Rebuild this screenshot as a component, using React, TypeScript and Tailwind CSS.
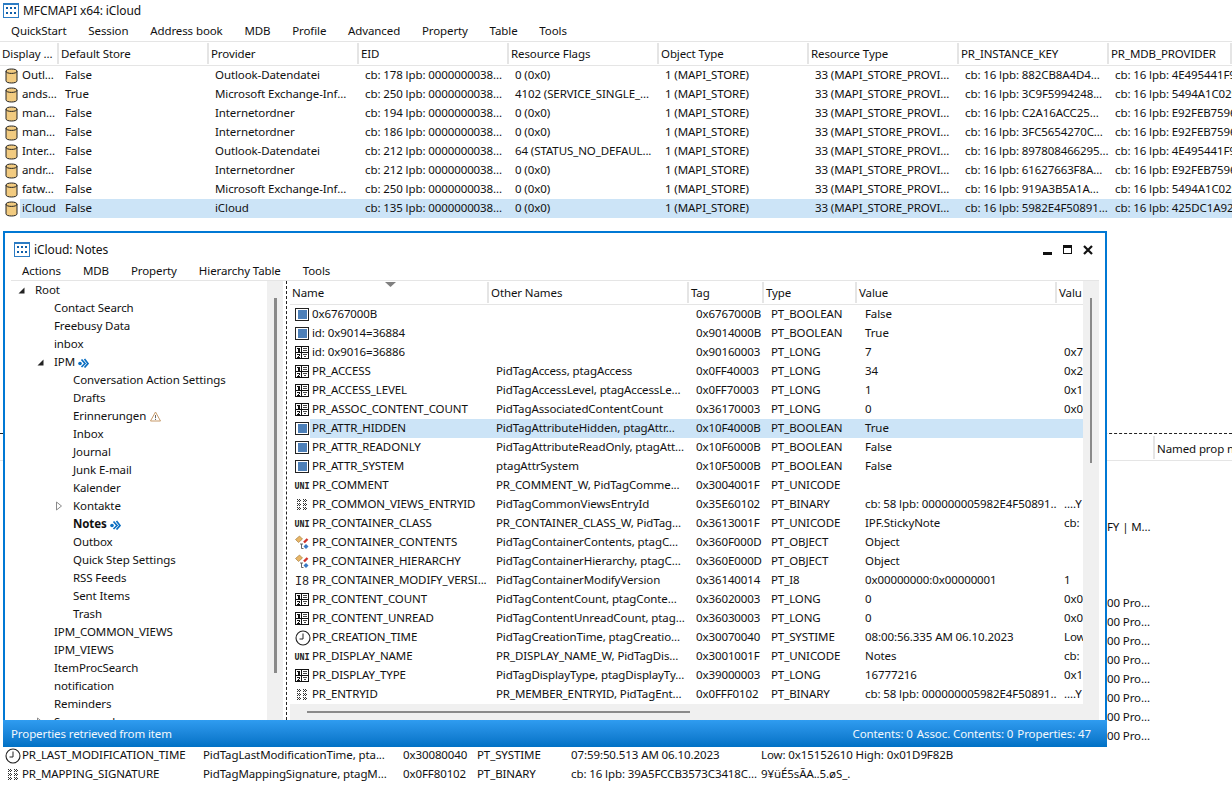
import React from "react";

const Logo = () => (
  <svg width="16" height="16" viewBox="0 0 16 16" shapeRendering="crispEdges" className="shrink-0">
    <rect x="0.5" y="0.5" width="15" height="14" fill="#fff" stroke="#2b7cc4" />
    <rect x="0" y="0" width="16" height="2" fill="#2b7cc4" />
    {[3, 7, 11].map((x) => (
      <React.Fragment key={x}>
        <rect x={x} y="4" width="2" height="2" fill="#0f5ea8" />
        <rect x={x} y="9" width="2" height="2" fill="#0f5ea8" />
      </React.Fragment>
    ))}
  </svg>
);

const Store = () => (
  <svg width="13" height="16" viewBox="0 0 13 16" className="shrink-0">
    <path d="M1 3.2C1 1.8 3.4 1 6.5 1s5.500.8 5.500 2.200v9.600c0 1.400-2.400 2.200-5.500 2.200S1 14.200 1 12.800z" fill="#f2cb80" stroke="#222" strokeWidth="1" />
    <path d="M1 3.200c0 1.400 2.400 2.200 5.500 2.200S12 4.600 12 3.200" fill="none" stroke="#222" strokeWidth="1" />
  </svg>
);

const Bool = () => (
  <svg width="15" height="15" viewBox="0 0 15 15" shapeRendering="crispEdges" className="shrink-0">
    <rect x="0.500" y="1.500" width="13" height="12" fill="#fff" stroke="#222" />
    <rect x="3" y="3" width="9" height="9" fill="#4c7fb8" />
  </svg>
);

const Num = () => (
  <svg width="15" height="15" viewBox="0 0 15 15" shapeRendering="crispEdges" className="shrink-0">
    <rect x="0.500" y="1.500" width="13" height="12" fill="#fff" stroke="#111" />
    <rect x="6" y="1" width="1" height="13" fill="#111" />
    <rect x="1" y="7" width="12" height="1" fill="#111" />
    <rect x="3" y="3" width="2" height="4" fill="#111" />
    <rect x="2" y="3" width="1" height="1" fill="#111" />
    <rect x="2" y="9" width="3" height="1" fill="#111" />
    <rect x="4" y="10" width="1" height="1" fill="#111" />
    <rect x="3" y="11" width="1" height="1" fill="#111" />
    <rect x="2" y="12" width="3" height="1" fill="#111" />
    <rect x="8" y="3" width="4" height="1" fill="#444" />
    <rect x="8" y="5" width="4" height="1" fill="#444" />
    <rect x="8" y="9" width="4" height="1" fill="#444" />
    <rect x="9" y="11" width="2" height="1" fill="#444" />
  </svg>
);

const Uni = () => (
  <svg width="16" height="15" viewBox="0 0 16 15" className="-ml-px shrink-0">
    <text x="0.500" y="11" fontFamily="Liberation Mono, monospace" fontWeight="700" fontSize="10.500" textLength="15" lengthAdjust="spacingAndGlyphs" fill="#222">UNI</text>
  </svg>
);

const I8 = () => (
  <svg width="15" height="15" viewBox="0 0 15 15" className="shrink-0">
    <text x="0" y="11.500" fontFamily="Liberation Mono, monospace" fontSize="12" textLength="14" lengthAdjust="spacingAndGlyphs" fill="#222">I8</text>
  </svg>
);

const binCells: [number, number][] = [];
[2, 3, 4, 6, 7, 8, 10, 11, 12].forEach((y) =>
  [2, 3, 4, 5, 8, 9, 10, 11].forEach((x) => {
    if ((x + y) % 2 === 0) binCells.push([x, y]);
  })
);

const Bin = () => (
  <svg width="15" height="15" viewBox="0 0 15 15" shapeRendering="crispEdges" className="shrink-0">
    {binCells.map(([x, y], i) => (
      <rect key={i} x={x} y={y} width="1" height="1" fill="#333" />
    ))}
  </svg>
);

const Obj = () => (
  <svg width="15" height="15" viewBox="0 0 15 15" className="shrink-0">
    <path d="M0.500 4.500L4.500 1l3 3-4 3.500z" fill="#e8b566" stroke="#9a7434" strokeWidth="0.600" />
    <path d="M9 7.500l3.500-3.500" stroke="#d0342c" strokeWidth="2.400" />
    <path d="M8.500 11.500l2.500-2.500 2.500 2.500-2.500 2.500z" fill="#3a78c2" />
    <path d="M5 9h3M6.500 9v4.500h2" fill="none" stroke="#555" strokeWidth="0.900" />
  </svg>
);

const Clock = () => (
  <svg width="16" height="16" viewBox="0 0 16 16" className="shrink-0">
    <circle cx="8" cy="8" r="7" fill="#fff" stroke="#222" strokeWidth="1.100" />
    <path d="M8 3.500V9H4.500" fill="none" stroke="#222" strokeWidth="1" />
  </svg>
);

const Sync = () => (
  <svg width="11" height="10" viewBox="0 0 11 10" className="shrink-0">
    <circle cx="2" cy="5.500" r="1.800" fill="#0b6fc2" />
    <path d="M3.500 1.500L7 5.500l-3.500 3.500M6.500 1l3.500 4.500L6.500 9.500" fill="none" stroke="#0b6fc2" strokeWidth="1.700" />
  </svg>
);

const Warn = () => (
  <svg width="11" height="11" viewBox="0 0 11 11" className="shrink-0">
    <path d="M5.500 1L10.500 10H0.500z" fill="#fff" stroke="#c79a6a" strokeWidth="1" />
    <path d="M5.500 4v3.200M5.500 8v1" stroke="#666" strokeWidth="1" />
  </svg>
);

const DownArrow = () => (
  <svg width="7" height="7" viewBox="0 0 7 7" className="shrink-0">
    <path d="M6.500 0.500V6.500H0.500z" fill="#222" />
  </svg>
);

const RightArrow = () => (
  <svg width="6" height="10" viewBox="0 0 6 10" className="shrink-0">
    <path d="M0.500 1L5.500 5 0.500 9z" fill="#fff" stroke="#8a8a8a" />
  </svg>
);

const storeRows = [
  ["Outl...", "False", "Outlook-Datendatei", "cb: 178 lpb: 0000000038...", "0 (0x0)", "882CB8A4D4...", "4E495441F9"],
  ["ands...", "True", "Microsoft Exchange-Inf...", "cb: 250 lpb: 0000000038...", "4102 (SERVICE_SINGLE_...", "3C9F5994248...", "5494A1C029"],
  ["man...", "False", "Internetordner", "cb: 194 lpb: 0000000038...", "0 (0x0)", "C2A16ACC25...", "E92FEB7596"],
  ["man...", "False", "Internetordner", "cb: 186 lpb: 0000000038...", "0 (0x0)", "3FC5654270C...", "E92FEB7596"],
  ["Inter...", "False", "Outlook-Datendatei", "cb: 212 lpb: 0000000038...", "64 (STATUS_NO_DEFAUL...", "897808466295...", "4E495441F9"],
  ["andr...", "False", "Internetordner", "cb: 212 lpb: 0000000038...", "0 (0x0)", "61627663F8A...", "E92FEB7596"],
  ["fatw...", "False", "Microsoft Exchange-Inf...", "cb: 250 lpb: 0000000038...", "0 (0x0)", "919A3B5A1A...", "5494A1C029"],
  ["iCloud", "False", "iCloud", "cb: 135 lpb: 0000000038...", "0 (0x0)", "5982E4F50891...", "425DC1A92"],
];

const storeHeaders = ["Default Store", "Provider", "EID", "Resource Flags", "Object Type", "Resource Type", "PR_INSTANCE_KEY", "PR_MDB_PROVIDER"];

type Kind = "bool" | "num" | "uni" | "bin" | "obj" | "i8" | "time";
const icons: Record<Kind, () => React.ReactElement> = { bool: Bool, num: Num, uni: Uni, bin: Bin, obj: Obj, i8: I8, time: Clock };

const props: [Kind, string, string, string, string, string, string][] = [
  ["bool", "0x6767000B", "", "0x6767000B", "PT_BOOLEAN", "False", ""],
  ["bool", "id: 0x9014=36884", "", "0x9014000B", "PT_BOOLEAN", "True", ""],
  ["num", "id: 0x9016=36886", "", "0x90160003", "PT_LONG", "7", "0x7"],
  ["num", "PR_ACCESS", "PidTagAccess, ptagAccess", "0x0FF40003", "PT_LONG", "34", "0x2"],
  ["num", "PR_ACCESS_LEVEL", "PidTagAccessLevel, ptagAccessLe...", "0x0FF70003", "PT_LONG", "1", "0x1"],
  ["num", "PR_ASSOC_CONTENT_COUNT", "PidTagAssociatedContentCount", "0x36170003", "PT_LONG", "0", "0x0"],
  ["bool", "PR_ATTR_HIDDEN", "PidTagAttributeHidden, ptagAttr...", "0x10F4000B", "PT_BOOLEAN", "True", ""],
  ["bool", "PR_ATTR_READONLY", "PidTagAttributeReadOnly, ptagAtt...", "0x10F6000B", "PT_BOOLEAN", "False", ""],
  ["bool", "PR_ATTR_SYSTEM", "ptagAttrSystem", "0x10F5000B", "PT_BOOLEAN", "False", ""],
  ["uni", "PR_COMMENT", "PR_COMMENT_W, PidTagComme...", "0x3004001F", "PT_UNICODE", "", ""],
  ["bin", "PR_COMMON_VIEWS_ENTRYID", "PidTagCommonViewsEntryId", "0x35E60102", "PT_BINARY", "cb: 58 lpb: 000000005982E4F50891...", "....Y"],
  ["uni", "PR_CONTAINER_CLASS", "PR_CONTAINER_CLASS_W, PidTag...", "0x3613001F", "PT_UNICODE", "IPF.StickyNote", "cb:"],
  ["obj", "PR_CONTAINER_CONTENTS", "PidTagContainerContents, ptagC...", "0x360F000D", "PT_OBJECT", "Object", ""],
  ["obj", "PR_CONTAINER_HIERARCHY", "PidTagContainerHierarchy, ptagC...", "0x360E000D", "PT_OBJECT", "Object", ""],
  ["i8", "PR_CONTAINER_MODIFY_VERSI...", "PidTagContainerModifyVersion", "0x36140014", "PT_I8", "0x00000000:0x00000001", "1"],
  ["num", "PR_CONTENT_COUNT", "PidTagContentCount, ptagConte...", "0x36020003", "PT_LONG", "0", "0x0"],
  ["num", "PR_CONTENT_UNREAD", "PidTagContentUnreadCount, ptag...", "0x36030003", "PT_LONG", "0", "0x0"],
  ["time", "PR_CREATION_TIME", "PidTagCreationTime, ptagCreatio...", "0x30070040", "PT_SYSTIME", "08:00:56.335 AM 06.10.2023", "Low"],
  ["uni", "PR_DISPLAY_NAME", "PR_DISPLAY_NAME_W, PidTagDis...", "0x3001001F", "PT_UNICODE", "Notes", "cb:"],
  ["num", "PR_DISPLAY_TYPE", "PidTagDisplayType, ptagDisplayTy...", "0x39000003", "PT_LONG", "16777216", "0x1"],
  ["bin", "PR_ENTRYID", "PR_MEMBER_ENTRYID, PidTagEnt...", "0x0FFF0102", "PT_BINARY", "cb: 58 lpb: 000000005982E4F50891...", "....Y"],
];

const tree: [number, string, string?][] = [
  [1, "Root", "down"],
  [2, "Contact Search"],
  [2, "Freebusy Data"],
  [2, "inbox"],
  [2, "IPM", "down-sync"],
  [3, "Conversation Action Settings"],
  [3, "Drafts"],
  [3, "Erinnerungen", "warn"],
  [3, "Inbox"],
  [3, "Journal"],
  [3, "Junk E-mail"],
  [3, "Kalender"],
  [3, "Kontakte", "right"],
  [3, "Notes", "bold"],
  [3, "Outbox"],
  [3, "Quick Step Settings"],
  [3, "RSS Feeds"],
  [3, "Sent Items"],
  [3, "Trash"],
  [2, "IPM_COMMON_VIEWS"],
  [2, "IPM_VIEWS"],
  [2, "ItemProcSearch"],
  [2, "notification"],
  [2, "Reminders"],
  [2, "Spamsearch", "right"],
];

const lowerRows: string[] = ["", "", "", "FY | M...", "", "", "", "00 Pro...", "00 Pro...", "00 Pro...", "00 Pro...", "00 Pro...", "00 Pro...", "00 Pro...", "00 Pro..."];

const Txt = ({ c, className = "" }: { c: string; className?: string }) => (
  <div className={"overflow-hidden whitespace-nowrap " + className}>{c}</div>
);

function TreeRow({ level, label, flag }: { level: number; label: string; flag?: string }) {
  const arrow = flag === "down" || flag === "down-sync" ? <DownArrow /> : flag === "right" ? <RightArrow /> : null;
  return (
    <div className={"flex h-[18px] items-center whitespace-nowrap " + (level === 1 ? "pl-[7px]" : level === 2 ? "pl-[26px]" : "pl-[45px]")}>
      <div className="flex w-[17px] shrink-0 items-center">{arrow}</div>
      <span className={flag === "bold" ? "font-bold" : ""}>{label}</span>
      {(flag === "down-sync" || flag === "bold") && (
        <span className="ml-[3px] mt-[2px]">
          <Sync />
        </span>
      )}
      {flag === "warn" && (
        <span className="ml-[4px]">
          <Warn />
        </span>
      )}
    </div>
  );
}

export default function App() {
  return (
    <div className="relative h-[787px] w-[1232px] overflow-hidden bg-white text-[11.5px] leading-[16px] tracking-[-0.1px] text-[#111] [font-family:'Noto_Sans',sans-serif]">
      {/* main window */}
      <div className="flex h-[21px] items-center gap-[4px] pl-[3px]">
        <Logo />
        <span className="text-[12px]">MFCMAPI x64: iCloud</span>
      </div>
      <div className="flex h-[20px] items-center gap-[21.750px] pl-[11px]">
        {["QuickStart", "Session", "Address book", "MDB", "Profile", "Advanced", "Property", "Table", "Tools"].map((m) => (
          <span key={m}>{m}</span>
        ))}
      </div>
      <div className="grid h-[25px] grid-cols-[59px_150px_150px_150px_150px_150px_150px_150px_123px] border-y border-[#e5e5e5]">
        <div className="my-px overflow-hidden whitespace-nowrap border-r-2 border-[#e5e5e5] pl-[2px] leading-[21px]">Display ...</div>
        {storeHeaders.map((h) => (
          <div key={h} className="my-px overflow-hidden whitespace-nowrap border-r-2 border-[#e5e5e5] pl-[2px] leading-[21px]">
            {h}
          </div>
        ))}
      </div>
      {storeRows.map((r, i) => (
        <div key={i} className="flex h-[19px] items-center">
          <div className="flex w-[20px] shrink-0 justify-center pl-[3px]">
            <Store />
          </div>
          <div className={"grid h-[19px] flex-1 grid-cols-[39px_150px_150px_150px_150px_150px_150px_150px_123px] items-center pb-[2px] " + (i === 7 ? "bg-[#cce4f7]" : "")}>
            <Txt c={r[0]} className="pl-[2px]" />
            <Txt c={r[1]} className="pl-[6px]" />
            <Txt c={r[2]} className="pl-[6px]" />
            <Txt c={r[3]} className="pl-[6px]" />
            <Txt c={r[4]} className="pl-[6px]" />
            <Txt c="1 (MAPI_STORE)" className="pl-[6px]" />
            <Txt c="33 (MAPI_STORE_PROVI..." className="pl-[6px]" />
            <Txt c={"cb: 16 lpb: " + r[5]} className="pl-[6px]" />
            <Txt c={"cb: 16 lpb: " + r[6]} className="pl-[6px]" />
          </div>
        </div>
      ))}

      {/* lower pane of the main window */}
      <div className="mt-[215px] border-t border-dashed border-[#222]">
        <div className="flex h-[27px] items-center justify-end border-b border-[#e5e5e5]">
          <div className="h-[23px] w-[79px] overflow-hidden whitespace-nowrap border-l-2 border-[#e5e5e5] pl-[2px] leading-[25px]">Named prop n</div>
        </div>
        {lowerRows.map((t, i) => (
          <div key={i} className="flex h-[19px] items-center justify-end pb-[2px]">
            <div className="w-[125px] overflow-hidden whitespace-nowrap">{t}</div>
          </div>
        ))}
        {[
          ["time", "PR_LAST_MODIFICATION_TIME", "PidTagLastModificationTime, pta...", "0x30080040", "PT_SYSTIME", "07:59:50.513 AM 06.10.2023", "Low: 0x15152610 High: 0x01D9F82B"],
          ["bin", "PR_MAPPING_SIGNATURE", "PidTagMappingSignature, ptagM...", "0x0FF80102", "PT_BINARY", "cb: 16 lpb: 39A5FCCB3573C3418C...", "9¥üÉ5sÃA..5.øS_."],
        ].map((r) => {
          const I = icons[r[0] as Kind];
          return (
            <div key={r[1]} className="flex h-[19px] items-center">
              <div className="flex w-[22px] shrink-0 justify-end pr-px">
                <I />
              </div>
              <div className="grid h-[19px] flex-1 grid-cols-[181px_200px_74px_94px_190px_200px] items-center pb-[2px]">
                {r.slice(1).map((c) => (
                  <Txt key={c} c={c} />
                ))}
              </div>
            </div>
          );
        })}
      </div>

      {/* child window */}
      <div className="absolute left-[3px] top-[231px] flex h-[516px] w-[1104px] flex-col bg-white">
        <div className="flex min-h-0 flex-1 flex-col border-x-2 border-t-2 border-[#0078d4] px-[6px]">
          <div className="flex h-[28px] shrink-0 items-center gap-[4px] pl-[3px] pt-[6px]">
            <Logo />
            <span className="text-[12px]">iCloud: Notes</span>
            <div className="ml-auto flex items-center gap-[10px] pr-[6px]">
              <svg width="10" height="10" viewBox="0 0 10 10" shapeRendering="crispEdges">
                <rect x="0" y="7" width="9" height="3" fill="#111" />
              </svg>
              <svg width="10" height="10" viewBox="0 0 10 10" shapeRendering="crispEdges">
                <rect x="0.500" y="0.500" width="8" height="8" fill="#fff" stroke="#111" />
                <rect x="0" y="0" width="9" height="3" fill="#111" />
              </svg>
              <svg width="10" height="10" viewBox="0 0 10 10">
                <path d="M1 1l8 8M9 1l-8 8" stroke="#111" strokeWidth="2.200" />
              </svg>
            </div>
          </div>
          <div className="flex h-[20px] shrink-0 items-center gap-[22px] border-b border-[#e5e5e5] pl-[11px]">
            {["Actions", "MDB", "Property", "Hierarchy Table", "Tools"].map((m) => (
              <span key={m}>{m}</span>
            ))}
          </div>
          <div className="flex min-h-0 flex-1">
            <div className="w-[256px] shrink-0 overflow-hidden">
              {tree.map(([l, t, f]) => (
                <TreeRow key={t + l} level={l} label={t} flag={f} />
              ))}
            </div>
            <div className="w-[16px] shrink-0 bg-[#f0f0f0] pl-[7px] pt-[17px]">
              <div className="h-[375px] w-[3px] bg-[#8a8a8a]" />
            </div>
            <div className="w-[7px] shrink-0 pl-[3px]">
              <div className="h-full border-l border-dashed border-[#222]" />
            </div>
            <div className="relative flex w-[793px] shrink-0 flex-col">
              <svg width="12" height="6" viewBox="0 0 12 6" className="absolute left-[95px] top-px">
                <path d="M0 0h11L5.500 5z" fill="#808080" />
              </svg>
              <div className="grid h-[24px] shrink-0 grid-cols-[199px_200px_75px_93px_200px_26px] border-b border-[#e5e5e5]">
                {["Name", "Other Names", "Tag", "Type", "Value", "Valu"].map((h, i) => (
                  <div key={h} className={"my-px overflow-hidden whitespace-nowrap pl-[2px] leading-[21px] " + (i < 5 ? "border-r-2 border-[#e5e5e5]" : "")}>
                    {h}
                  </div>
                ))}
              </div>
              <div className="min-h-0 flex-1 overflow-hidden">
                {props.map((p) => {
                  const I = icons[p[0]];
                  return (
                    <div key={p[1]} className="flex h-[19px] items-center">
                      <div className="flex w-[20px] shrink-0 pl-[5px]">
                        <I />
                      </div>
                      <div className={"grid h-[19px] flex-1 grid-cols-[179px_200px_75px_93px_200px_26px] items-center pb-[2px] " + (p[1] === "PR_ATTR_HIDDEN" ? "bg-[#cce4f7]" : "")}>
                        <Txt c={p[1]} className="pl-[2px]" />
                        <Txt c={p[2]} className="pl-[7px]" />
                        <Txt c={p[3]} className="pl-[7px]" />
                        <Txt c={p[4]} className="pl-[7px]" />
                        <Txt c={p[5]} className="pl-[8px]" />
                        <Txt c={p[6]} className="pl-[7px]" />
                      </div>
                    </div>
                  );
                })}
              </div>
              <div className="h-[16px] shrink-0 bg-[#f0f0f0] pl-[17px] pt-[7px]">
                <div className="h-[2px] w-[383px] bg-[#8a8a8a]" />
              </div>
            </div>
            <div className="w-[16px] shrink-0 bg-[#f0f0f0] pl-[7px] pt-[17px]">
              <div className="h-[165px] w-[2px] bg-[#8a8a8a]" />
            </div>
          </div>
        </div>
        <div className="flex h-[27px] shrink-0 items-center justify-between bg-gradient-to-b from-[#2f9cf0] to-[#0071c5] pl-[8px] pr-[16px] text-[#f2f8fd]">
          <span>Properties retrieved from item</span>
          <span className="flex gap-[4px]">
            <span>Contents: 0</span>
            <span>Assoc. Contents: 0</span>
            <span>Properties: 47</span>
          </span>
        </div>
      </div>
    </div>
  );
}
